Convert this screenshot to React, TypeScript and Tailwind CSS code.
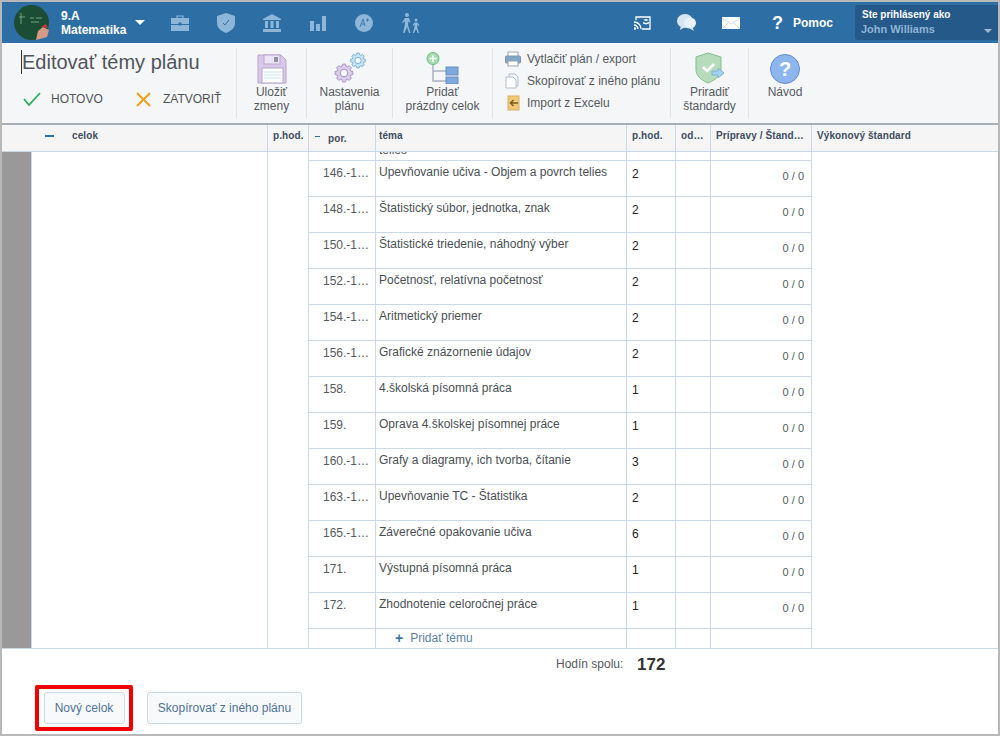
const font = "[font-family:'Liberation_Sans',Arial,sans-serif]";

const rows: [string, string, string][] = [
  ['146.-1…', 'Upevňovanie učiva - Objem a povrch telies', '2'],
  ['148.-1…', 'Štatistický súbor, jednotka, znak', '2'],
  ['150.-1…', 'Štatistické triedenie, náhodný výber', '2'],
  ['152.-1…', 'Početnosť, relatívna početnosť', '2'],
  ['154.-1…', 'Aritmetický priemer', '2'],
  ['156.-1…', 'Grafické znázornenie údajov', '2'],
  ['158.', '4.školská písomná práca', '1'],
  ['159.', 'Oprava 4.školskej písomnej práce', '1'],
  ['160.-1…', 'Grafy a diagramy, ich tvorba, čítanie', '3'],
  ['163.-1…', 'Upevňovanie TC - Štatistika', '2'],
  ['165.-1…', 'Záverečné opakovanie učiva', '6'],
  ['171.', 'Výstupná písomná práca', '1'],
  ['172.', 'Zhodnotenie celoročnej práce', '1'],
];

const navColor = '#8db6d8';

const Avatar = () => (
  <svg width="35" height="35" viewBox="0 0 35 35" className="shrink-0">
    <circle cx="17.500" cy="17.500" r="17.500" fill="#1a4d33" />
    <path d="M7 8v11M5 12h6M16 13h4M22 13h6M17 17h8" stroke="#8fb59d" strokeWidth=".8" fill="none" />
    <path d="M22 35l2-9 5-4 6 3-2 7z" fill="#d79a86" />
    <path d="M27 22l5-3 2 4z" fill="#c23b3b" />
  </svg>
);

// gear outline with eight teeth
const gearPoints = (cx: number, cy: number, outer: number, inner: number) => {
  const pts: string[] = [];
  for (let i = 0; i < 8; i++) {
    const a = (i * Math.PI) / 4;
    [[-0.3, inner], [-0.17, outer], [0.17, outer], [0.3, inner]].forEach(([d, r]) => {
      pts.push(`${(cx + r * Math.cos(a + d)).toFixed(2)},${(cy + r * Math.sin(a + d)).toFixed(2)}`);
    });
  }
  return pts.join(' ');
};

const Gear = ({ cx, cy, r, fill, stroke }: { cx: number; cy: number; r: number; fill: string; stroke: string }) => (
  <g>
    <polygon points={gearPoints(cx, cy, r, r * 0.78)} fill={fill} stroke={stroke} strokeWidth="1" />
    <circle cx={cx} cy={cy} r={r * 0.42} fill="#f5f6f8" stroke={stroke} strokeWidth="1" />
  </g>
);

const ToolButton = ({ width, icon, lines }: { width: string; icon: React.ReactNode; lines: string[] }) => (
  <div className={`${width} flex flex-col items-center border-r border-[#dfe2e6] h-[70px] shrink-0`}>
    <div className="h-[36px] flex items-end justify-center">{icon}</div>
    <div className="text-[12px] leading-[14px] text-[#555a60] text-center whitespace-nowrap mt-px">
      {lines.map((l) => <div key={l}>{l}</div>)}
    </div>
  </div>
);

const headCell = 'text-[10px] font-bold text-[#3f4d5e] tracking-[0.1px] border-r border-[#c9d9e8] h-full whitespace-nowrap';

const App = () => (
  <div className={`${font} w-[1000px] h-[736px] border-2 border-[#b8b8b8] bg-white flex flex-col overflow-hidden`}>
    {/* top bar */}
    <header className="h-[41px] bg-[#2d6fa5] flex items-center shrink-0">
      <div className="ml-3"><Avatar /></div>
      <div className="ml-[12px] w-[74px] text-[12px] leading-[14px] font-bold text-white">
        <div>9.A</div>
        <div>Matematika</div>
      </div>
      <div className="w-0 h-0 border-x-[5px] border-x-transparent border-t-[5px] border-t-white" />
      <div className="flex items-center ml-[26px]">
        <div className="w-[46px]">
          <svg width="18" height="16" viewBox="0 0 18 16"><path d="M6 3V1h6v2" stroke={navColor} strokeWidth="1.2" fill="none" /><rect y="3" width="18" height="6" fill={navColor} /><rect y="10" width="18" height="6" fill={navColor} /><rect x="7.500" y="7.500" width="3" height="3" fill="#2d6fa5" /></svg>
        </div>
        <div className="w-[46px]">
          <svg width="18" height="20" viewBox="0 0 18 20"><path d="M9 0l9 3v7c0 5-4 8-9 10C4 18 0 15 0 10V3z" fill={navColor} /><path d="M6 10l2 2 4-5" stroke="#2d6fa5" strokeWidth="1" fill="none" /></svg>
        </div>
        <div className="w-[46px]">
          <svg width="18" height="18" viewBox="0 0 18 18"><path d="M9 0l9 5v1H0V5z" fill={navColor} /><path d="M2 7h3v7H2zM7.500 7h3v7h-3zM13 7h3v7h-3zM0 15h18v3H0z" fill={navColor} /></svg>
        </div>
        <div className="w-[46px]">
          <svg width="16" height="16" viewBox="0 0 16 16" className="ml-px"><path d="M0 6h4v10H0zM6 9h4v7H6zM12 1h4v15h-4z" fill={navColor} /></svg>
        </div>
        <div className="w-[46px]">
          <svg width="18" height="18" viewBox="0 0 18 18"><circle cx="9" cy="9" r="9" fill={navColor} /><path d="M5 13l3-8 2 7M6 10h4M11 6h3M12.500 4.500v3" stroke="#2d6fa5" strokeWidth=".8" fill="none" /></svg>
        </div>
        <div className="w-[40px]">
          <svg width="20" height="20" viewBox="0 0 20 20" fill={navColor}><circle cx="6" cy="2" r="2" /><circle cx="15" cy="7" r="1.500" /><path d="M4 5h4l1.500 4-1 .5-1-1.500-.5 4 2.500 8H8L6 14l-2.500 6H2l2-9V8L2 10l-1-.5z" /><path d="M13.500 9.500h3l2 3-.8.5-1.200-1.500-.2 3 1.700 5.500h-1.200L15 16l-2 4h-1.200l1.700-6-.2-2.500-1 1-.8-.5z" /></svg>
        </div>
      </div>
      <div className="flex-1" />
      <div className="flex items-center">
        <div className="w-[43px]">
          <svg width="17" height="14" viewBox="0 0 17 14"><path d="M2 4V1h14v12H8" stroke="white" strokeWidth="1.300" fill="none" /><path d="M0 6c4 0 7 3 7 7M0 9c2 0 4 2 4 4" stroke="white" strokeWidth="1.300" fill="none" /><circle cx="1" cy="12.500" r="1.300" fill="white" /><path d="M9 4l3-1 3 1-3 1zM9 6l3 1 3-1v1.500l-3 1-3-1z" fill="white" /></svg>
        </div>
        <div className="w-[45px]">
          <svg width="19" height="17" viewBox="0 0 19 17" fill="#d5e5f2"><ellipse cx="8" cy="7" rx="8" ry="7" /><ellipse cx="13" cy="9" rx="6" ry="5.500" fill="#e9f1f8" /><path d="M4 11l-1 5 5-3zM15 12l2 5-5-3z" /></svg>
        </div>
        <div className="w-[50px]">
          <svg width="18" height="12" viewBox="0 0 18 12"><rect width="18" height="12" fill="white" /><path d="M0 1l9 6 9-6M0 12l6-6M18 12l-6-6" stroke="#bcd3e6" strokeWidth=".8" fill="none" /></svg>
        </div>
        <div className="w-[21px] text-[18px] leading-none font-bold text-white">?</div>
        <div className="text-[12px] font-bold text-white w-[62px]">Pomoc</div>
      </div>
      <div className="w-[143px] h-[35px] bg-[#24598a] rounded-l-[3px] pl-[6px] pt-[3px] relative shrink-0">
        <div className="ml-px text-[10px] leading-[13px] font-bold text-white">Ste prihlásený ako</div>
        <div className="text-[11px] leading-[16px] font-bold text-[#8fb4d4]">John Williams</div>
        <div className="absolute right-[6px] bottom-[7px] w-0 h-0 border-x-[4px] border-x-transparent border-t-[4px] border-t-[#9fb8cc]" />
      </div>
    </header>

    {/* toolbar */}
    <div className="h-[81px] mt-px bg-[#f5f6f8] border-b-2 border-[#a9b0b6] shrink-0 flex pt-[4px]">
      <div className="w-[235px] h-[70px] border-r border-[#dfe2e6] shrink-0 pl-[19px] pt-[2px]">
        <div className="text-[20px] leading-[24px] text-[#50555b] border-l border-[#333] w-max">Editovať témy plánu</div>
        <div className="flex items-center mt-[16px] text-[12px] text-[#50555b]">
          <svg width="18" height="14" viewBox="0 0 18 14" className="ml-[2px]"><path d="M1 7l5 6L17 1" stroke="#27ae60" strokeWidth="1.800" fill="none" /></svg>
          <span className="ml-[10px] w-[85px]">HOTOVO</span>
          <svg width="15" height="15" viewBox="0 0 15 15"><path d="M1 1l13 13M14 1L1 14" stroke="#f39c12" strokeWidth="1.800" fill="none" /></svg>
          <span className="ml-[12px]">ZATVORIŤ</span>
        </div>
      </div>
      <ToolButton width="w-[70px]" lines={['Uložiť', 'zmeny']} icon={
        <svg width="30" height="30" viewBox="0 0 30 30"><path d="M1 1h23l5 5v23H1z" fill="#d8c9e8" stroke="#b9a5d0" /><rect x="7" y="1" width="16" height="9" fill="#ece5f3" stroke="#b9a5d0" /><rect x="17" y="3" width="4" height="5" fill="#8d93a0" /><rect x="5" y="14" width="21" height="15" fill="white" stroke="#b9a5d0" /><path d="M7 18h17M7 21h17M7 24h17" stroke="#c5e0f0" /></svg>
      } />
      <ToolButton width="w-[86px]" lines={['Nastavenia', 'plánu']} icon={
        <svg width="32" height="32" viewBox="0 0 32 32">
          <Gear cx={10} cy={21} r={9} fill="#dccdea" stroke="#a895c4" />
          <Gear cx={24} cy={8.500} r={7.500} fill="#c4e3f4" stroke="#82b3d4" />
        </svg>
      } />
      <ToolButton width="w-[100px]" lines={['Pridať', 'prázdny celok']} icon={
        <svg width="34" height="32" viewBox="0 0 34 32">
          <path d="M7 12v17h13M7 19h13" stroke="#a8b4c2" strokeWidth="1.500" fill="none" />
          <circle cx="7" cy="6.500" r="6" fill="#a8dcb0" stroke="#6dbb7a" />
          <path d="M3.500 6.500h7M7 3v7" stroke="white" strokeWidth="1.500" />
          <rect x="20" y="15" width="12" height="8" fill="#7ba9e0" stroke="#6c8fb8" />
          <rect x="20" y="25" width="12" height="7" fill="#7ba9e0" stroke="#6c8fb8" />
        </svg>
      } />
      <div className="w-[178px] h-[70px] border-r border-[#dfe2e6] shrink-0 pl-[12px] text-[12px] leading-[22px] text-[#555a60]">
        <div className="flex items-center gap-[6px]">
          <svg width="16" height="16" viewBox="0 0 16 16"><rect x="3" y="1" width="10" height="5" fill="white" stroke="#9aa3ad" /><rect x="0.500" y="5" width="15" height="7" rx="1" fill="#7fa6c9" stroke="#8595a6" /><rect x="3" y="10" width="10" height="5" fill="white" stroke="#9aa3ad" /></svg>
          <span>Vytlačiť plán / export</span>
        </div>
        <div className="flex items-center gap-[6px]">
          <svg width="16" height="16" viewBox="0 0 16 16"><path d="M4 1h6l3 3v9H4z" fill="#f2f4f7" stroke="#b4bfca" /><path d="M1 4h7l3 3v8H1z" fill="white" stroke="#b4bfca" /></svg>
          <span>Skopírovať z iného plánu</span>
        </div>
        <div className="flex items-center gap-[6px]">
          <svg width="16" height="16" viewBox="0 0 16 16"><rect x="3" y="1" width="11" height="14" fill="#f0c878" stroke="#d8ae5e" /><path d="M13 8H6M8.500 5L5.500 8l3 3" stroke="#7a5a1e" strokeWidth="1.500" fill="none" /></svg>
          <span>Import z Excelu</span>
        </div>
      </div>
      <ToolButton width="w-[78px]" lines={['Priradiť', 'štandardy']} icon={
        <svg width="30" height="32" viewBox="0 0 30 32">
          <path d="M13 1l13 4v12c0 7-6 11-13 14C6 28 1 24 1 17V5z" fill="#b7dcbc" stroke="#82bf8c" />
          <path d="M8 15l4 4 7-7" stroke="white" strokeWidth="2.500" fill="none" />
          <path d="M17 19h6v-3l6 5-6 5v-3h-6z" fill="#a5d2f0" stroke="#7ab0d6" />
        </svg>
      } />
      <div className="w-[72px] h-[70px] flex flex-col items-center shrink-0">
        <div className="h-[36px] flex items-end justify-center">
          <div className="w-[30px] h-[30px] rounded-full bg-[#8db6ee] border border-[#5f8cc4] text-white font-bold text-[20px] leading-[28px] text-center">?</div>
        </div>
        <div className="text-[12px] leading-[14px] text-[#555a60] mt-px">Návod</div>
      </div>
    </div>

    {/* table head */}
    <div className="h-[27px] bg-[#f5f5f5] border-b border-[#c9d9e8] shrink-0 flex">
      <div className={`${headCell} w-[266px] flex pt-[3px]`}>
        <span className="ml-[43px] mt-[7px] w-[9px] h-[2px] bg-[#2d6fa5]" />
        <span className="ml-[18px]">celok</span>
      </div>
      <div className={`${headCell} w-[41px] pl-[5px] pt-[3px]`}>p.hod.</div>
      <div className={`${headCell} w-[67px] flex pt-[6px]`}>
        <span className="ml-[6px] mt-[5px] w-[5px] h-px bg-[#2d6fa5]" />
        <span className="ml-[8px]">por.</span>
      </div>
      <div className={`${headCell} w-[251px] pl-[3px] pt-[3px]`}>téma</div>
      <div className={`${headCell} w-[49px] pl-[5px] pt-[3px]`}>p.hod.</div>
      <div className={`${headCell} w-[35px] pl-[5px] pt-[3px]`}>od…</div>
      <div className={`${headCell} w-[101px] pl-[5px] pt-[3px]`}>Prípravy / Štand…</div>
      <div className="text-[10px] font-bold text-[#3f4d5e] tracking-[0.1px] pl-[5px] pt-[3px]">Výkonový štandard</div>
    </div>

    {/* table body */}
    <div className="h-[497px] border-b border-[#c9d9e8] shrink-0 flex overflow-hidden">
      <div className="w-[30px] bg-[#999999] border-r border-[#c9d9e8] shrink-0" />
      <div className="w-[236px] border-r border-[#c9d9e8] shrink-0" />
      <div className="w-[41px] border-r border-[#c9d9e8] shrink-0" />
      <div className="w-[503px] border-r border-[#c9d9e8] shrink-0">
        <div className="h-[9px] grid grid-cols-[67px_251px_49px_35px_101px] border-b border-[#c9d9e8] overflow-hidden">
          <div className="border-r border-[#c9d9e8]" />
          <div className="border-r border-[#c9d9e8] pl-[3px] text-[12px] leading-[14px] text-[#4a4f55] -mt-[9px]">telies</div>
          <div className="border-r border-[#c9d9e8]" />
          <div className="border-r border-[#c9d9e8]" />
          <div />
        </div>
        {rows.map(([por, tema, hod]) => (
          <div key={por + tema} className="h-[36px] grid grid-cols-[67px_251px_49px_35px_101px] border-b border-[#c9d9e8] text-[12px]">
            <div className="border-r border-[#c9d9e8] pl-[14px] pt-[3px] text-[#555a60]">{por}</div>
            <div className="border-r border-[#c9d9e8] pl-[3px] pt-[2px] text-[#4a4f55]">{tema}</div>
            <div className="border-r border-[#c9d9e8] pl-[5px] pt-[4px] text-[#222]">{hod}</div>
            <div className="border-r border-[#c9d9e8]" />
            <div className="text-[11px] text-right pr-[8px] pt-[7px] text-[#555a60]">0 / 0</div>
          </div>
        ))}
        <div className="h-[19px] grid grid-cols-[67px_251px_49px_35px_101px] text-[12px]">
          <div className="border-r border-[#c9d9e8]" />
          <div className="border-r border-[#c9d9e8] pl-[19px] pb-[6px] text-[#5d7f9f] flex items-center h-full">
            <span className="font-bold text-[14px] leading-none text-[#3f76a8] mr-[7px]">+</span>Pridať tému
          </div>
          <div className="border-r border-[#c9d9e8]" />
          <div className="border-r border-[#c9d9e8]" />
          <div />
        </div>
      </div>
    </div>

    {/* footer */}
    <div className="flex-1">
      <div className="flex items-center h-[30px] pl-[554px]">
        <span className="text-[12px] text-[#555a60] w-[81px]">Hodín spolu:</span>
        <span className="text-[17px] font-bold text-[#333] pt-[2px]">172</span>
      </div>
      <div className="flex items-center ml-[33px] mt-[6px]">
        <div className="w-[98px] h-[46px] border-[4px] border-[#f00000] rounded-[2px] flex items-center justify-center mr-[14px]">
          <button className="w-[81px] h-[32px] rounded-[3px] border border-[#c9d9e8] bg-[#f7f9fb] text-[12px] text-[#4f7396]">Nový celok</button>
        </div>
        <button className="w-[155px] h-[32px] rounded-[3px] border border-[#c9d9e8] bg-[#f7f9fb] text-[12px] text-[#4f7396]">Skopírovať z iného plánu</button>
      </div>
    </div>
  </div>
);

export default App;
